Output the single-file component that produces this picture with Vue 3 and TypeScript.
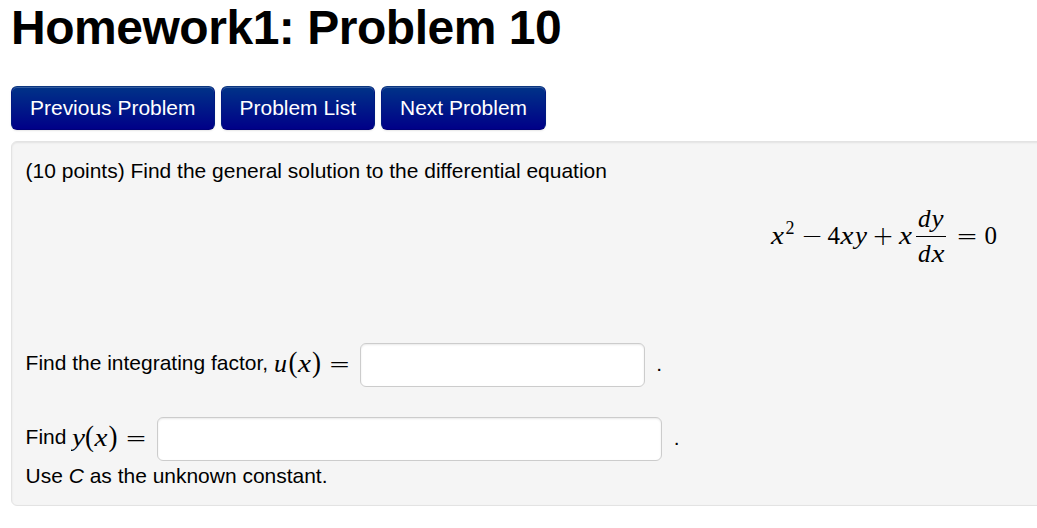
<script setup lang="ts">
import { ref } from 'vue'

interface Glyph {
  t: string
  x: number
  y: number
  w: number
  kind?: 'up' | 'sup' | 'op' | 'paren'
}

const buttons: string[] = ['Previous Problem', 'Problem List', 'Next Problem']

const equation: Glyph[] = [
  { t: 'x', x: 1, y: 43.5, w: 13 },
  { t: '2', x: 15.5, y: 34, w: 9, kind: 'sup' },
  { t: '−', x: 31, y: 45, w: 22, kind: 'op' },
  { t: '4', x: 57.5, y: 43.5, w: 12.5, kind: 'up' },
  { t: 'x', x: 70.5, y: 43.5, w: 13 },
  { t: 'y', x: 85, y: 43.5, w: 12 },
  { t: '+', x: 102, y: 45, w: 22, kind: 'op' },
  { t: 'x', x: 129, y: 43.5, w: 13 },
  { t: 'd', x: 148, y: 26.5, w: 12.5 },
  { t: 'y', x: 161.5, y: 26.5, w: 12 },
  { t: 'd', x: 148, y: 61.5, w: 12.5 },
  { t: 'x', x: 161.5, y: 61.5, w: 13 },
  { t: '=', x: 186, y: 45, w: 22, kind: 'op' },
  { t: '0', x: 214.5, y: 43.5, w: 12.5, kind: 'up' },
]

const makeFunction = (name: string, shift: number): Glyph[] => [
  { t: name, x: 1, y: 29, w: 13 },
  { t: '(', x: 15.5 - shift, y: 29, w: 9, kind: 'paren' },
  { t: 'x', x: 25 - shift, y: 29, w: 13 },
  { t: ')', x: 39 - shift, y: 29, w: 9, kind: 'paren' },
  { t: '=', x: 55.5 - shift, y: 30, w: 22, kind: 'op' },
]
const factorLabel = makeFunction('u', 0)
const solutionLabel = makeFunction('y', 1.5)

const factor = ref('')
const solution = ref('')
</script>

<template>
  <main class="page">
    <h1>Homework1: Problem 10</h1>
    <nav class="nav">
      <button v-for="b in buttons" :key="b" type="button">{{ b }}</button>
    </nav>
    <section class="problem">
      <p class="line">(10 points) Find the general solution to the differential equation</p>
      <svg class="math equation" width="230" height="80">
        <text v-for="(g, i) in equation" :key="i" :class="g.kind" :x="g.x" :y="g.y" :textLength="g.w" lengthAdjust="spacingAndGlyphs">{{ g.t }}</text>
        <rect x="146" y="36" width="30" height="1" />
      </svg>
      <div class="row factor">
        <label for="factor">Find the integrating factor,</label>
        <svg class="math" width="80" height="44">
          <text v-for="(g, i) in factorLabel" :key="i" :class="g.kind" :x="g.x" :y="g.y" :textLength="g.w" lengthAdjust="spacingAndGlyphs">{{ g.t }}</text>
        </svg>
        <input id="factor" v-model="factor" type="text" />
        <span class="stop">.</span>
      </div>
      <div class="row solution">
        <label for="solution">Find</label>
        <svg class="math" width="79" height="44">
          <text v-for="(g, i) in solutionLabel" :key="i" :class="g.kind" :x="g.x" :y="g.y" :textLength="g.w" lengthAdjust="spacingAndGlyphs">{{ g.t }}</text>
        </svg>
        <input id="solution" v-model="solution" type="text" />
        <span class="stop">.</span>
      </div>
      <p class="line note">Use <i>C</i> as the unknown constant.</p>
    </section>
  </main>
</template>

<style>
html,
body {
  background: #fff;
  overflow: hidden;
}
</style>

<style scoped>
.page {
  box-sizing: border-box;
  width: 1060px;
  height: 528px;
  padding-left: 11px;
  font-family: "Liberation Sans", Arial, sans-serif;
  font-size: 20.98px;
  color: #000;
}
h1 {
  margin: 0;
  height: 86px;
  font-size: 48px;
  letter-spacing: -0.47px;
  line-height: 56px;
  white-space: nowrap;
}
.nav {
  display: flex;
  gap: 6px;
  margin-bottom: 11px;
}
.nav button {
  box-sizing: border-box;
  height: 44px;
  padding: 0 18px;
  border: 1px solid;
  border-color: #0c3680 #001a80 #000078;
  border-radius: 6px;
  background: linear-gradient(#003388, #000088);
  box-shadow: inset 0 1px 0 rgba(255, 255, 255, 0.2), 0 1px 2px rgba(0, 0, 0, 0.1);
  color: #fff;
  font: inherit;
  line-height: 42px;
  white-space: nowrap;
}
.problem {
  box-sizing: border-box;
  height: 365px;
  padding: 14px 14px 0 13.6px;
  border: 1px solid #e3e3e3;
  border-radius: 6px;
  background: #f5f5f5;
  box-shadow: inset 0 1px 2px rgba(0, 0, 0, 0.08);
}
.line {
  margin: 0;
  line-height: 30px;
  white-space: nowrap;
}
.math {
  display: block;
  flex: none;
  font-family: "Liberation Serif", "Times New Roman", serif;
  font-size: 25px;
  font-style: italic;
}
.math .up {
  font-style: normal;
  font-size: 24.5px;
}
.math .sup {
  font-style: normal;
  font-size: 18px;
}
.math .paren {
  font-style: normal;
  font-size: 29px;
}
.math .op {
  font-family: "DejaVu Sans", sans-serif;
  font-size: 27px;
  font-style: normal;
  font-weight: 200;
}
.equation {
  margin: 14px 0 0 744.4px;
}
.row {
  display: flex;
  height: 44px;
}
.row label {
  line-height: 40px;
  white-space: nowrap;
}
.factor {
  margin-top: 63px;
}
.solution {
  margin-top: 30px;
}
.row .math {
  margin-left: 5px;
}
.row input {
  box-sizing: border-box;
  flex: none;
  height: 44px;
  border: 1px solid #ccc;
  border-radius: 6px;
  background: #fff;
  box-shadow: inset 0 1px 2px rgba(0, 0, 0, 0.09);
  outline: none;
}
.factor input {
  width: 285px;
  margin-left: 7px;
}
.solution input {
  width: 505px;
  margin-left: 7px;
}
.stop {
  margin-left: 11.3px;
  line-height: 42px;
}
</style>
